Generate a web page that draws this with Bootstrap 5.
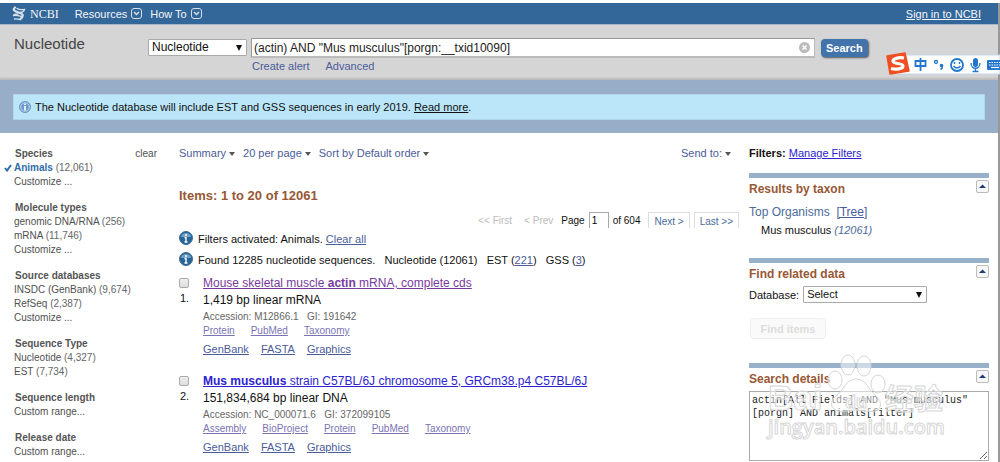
<!DOCTYPE html>
<html lang="en">
<head>
<meta charset="utf-8">
<meta name="viewport" content="width=device-width, initial-scale=1">
<title>Nucleotide - NCBI</title>
<link href="https://cdn.jsdelivr.net/npm/bootstrap@5.3.0/dist/css/bootstrap.min.css" rel="stylesheet">
<style>
body{font-family:"Liberation Sans",Arial,sans-serif;font-size:11px;line-height:14px;color:#111;background:#fff;padding-top:3px}
h1,h2,h3{line-height:14px;margin:0}
a{color:#4b5c9b}
.page{min-height:calc(100vh - 3px);border-right:2px solid #999}
.topbar{background:#336699;height:21px;padding:0 17px 0 12px}
.topbar a{color:#fff;opacity:.95}
.brand{font-family:"Liberation Serif",serif;font-size:12px}
.searchbar{background:#d5d5d5;border-top:1px solid #a9b6c3;height:56px;padding:13px 14px 0;box-shadow:inset 0 -3px 2px -1px #bbb}
.db-title{font-size:15px;font-weight:400;color:#444;width:134px;line-height:16px;margin-top:-2px}
.arrow-select{appearance:none;border:1px solid #aaa;border-radius:1px;font-size:12px;line-height:15px;height:17px;padding:0 16px 0 3px;color:#111;background:#fff url("data:image/svg+xml,%3Csvg xmlns='http://www.w3.org/2000/svg' viewBox='0 0 6 6'%3E%3Cpath d='M0 0h6L3 6z' fill='%23111'/%3E%3C/svg%3E") no-repeat right 4px center/6px 6px}
.db-select{width:99px;margin-top:1px}
.rel-select{width:124px;font-size:11px}
.query{max-width:564px}
.query input{border:1px solid #aaa;border-bottom-width:2px;border-color:#999 #bbb #bbb #999;height:20px;width:100%;font-size:12px;padding:0 24px 0 2px;color:#222}
.query-links{margin-top:1px;padding-left:1px}
.clear-btn{right:5px;top:4px;border:0;padding:0;background:none;line-height:0}
.search-btn{font-size:11px;font-weight:700;line-height:14px;color:#fff;background:#4273ab;border:0;border-radius:4px;height:18px;padding:1px 5px;margin:1px 0 0 6px;box-shadow:1px 1px 2px #555}
.notice-band{background:#98aec8;height:53px;padding:14px 13px}
.notice{background:#bbe5f8;border:1px solid #aed5ec;height:26px;padding:0 5px}
.notice a{color:#111}
.layout{display:grid;grid-template-columns:143px minmax(0,1fr) 240px;padding:0 9px 0 14px}
.facets{font-size:10px;color:#666;padding-top:14px}
.facets h3{font-size:10px;font-weight:700;color:#555;padding-left:1px}
.facets a{color:#505050;text-decoration:none}
.facets ul{margin-bottom:12px}
.facets .active-facet{color:#2f6da8;font-weight:700}
.tick{left:-10px;top:2px}
.results{padding:13px 10px 0 22px}
.menu-btn{border:0;background:none;padding:0;color:#4b5c9b;line-height:14px}
.menu-btn::after{content:"";display:inline-block;border:3px solid transparent;border-top:4px solid #555;border-bottom:0;margin-left:3px;vertical-align:1px}
.count{font-size:13px;font-weight:700;color:#985735;margin-top:29px}
.pager{height:16px;margin-top:9px;font-size:10px;line-height:17px}
.off{color:#bbb}
.pager input{width:20px;height:16px;border:1px solid #aaa;border-bottom:0;padding:0 2px;font-size:10px}
.pager .box{border:1px solid #ddd;border-bottom:0;color:#4b6c9b;text-decoration:none;padding:0 5px}
.msg{height:21px}
.hit{margin-bottom:16px}
.hit-no{width:24px;font-size:11px}
.hit-no input{appearance:none;display:block;width:10px;height:10px;border:1px solid #aaa;border-radius:2px;background:linear-gradient(#eee,#ddd);margin:4px 0 0}
.hit-no label{margin-top:3px;padding-left:1px}
.hit-title{font-size:12px;line-height:18px}
.size-line{font-size:12px;line-height:16px}
.acc{font-size:10px;line-height:14px;color:#666;margin-top:2px}
.refs{font-size:10px;line-height:13px}
.refs a{color:#7a74b4}
.seen{color:#773a9b}
.fresh{color:#2c22d0}
.formats{margin-top:5px}
.side{padding-top:13px}
.portlet{border-top:5px solid #98b1cb;padding-top:4px}
.portlet-taxon{margin-top:13px}
.portlet-related{margin-top:21px}
.portlet h2{font-size:12px;line-height:15px;font-weight:700;color:#985735}
.organisms{font-size:12px}
.taxon-link{color:#4b6c9b}
.fold{width:13px;height:13px;margin-top:-2px;padding:0;border:1px solid #bbb;border-radius:2px;background:#f7f7f7;line-height:0}
.find-btn{font-size:11px;font-weight:700;line-height:14px;color:#ddd;background:#fafafa;border:1px solid #eee;border-radius:4px;height:21px;width:76px;padding:0;margin:15px 0 24px 1px}
.details{font-family:"Liberation Mono",monospace;font-size:10px;line-height:13px;color:#222;border:1px solid #aaa;width:100%;height:70px;padding:2px;overflow:hidden;white-space:pre}
.watermark{left:16px;top:-38px;pointer-events:none}
.ime{right:0;top:51px;z-index:5}
</style>
</head>
<body class="position-relative overflow-x-hidden">
<div class="page">
<nav class="topbar d-flex align-items-center">
  <a href="#" class="brand d-flex align-items-center text-decoration-none">
    <svg width="14" height="15" viewBox="0 0 14 15" fill="none" stroke="#dfe9f3" stroke-linecap="round"><path d="M3 1.500C0 4 3 5.500 6.500 6.500S13 9 8.500 13" stroke-width="2.200"/><path d="M5 2.500C7 4 9 4 12.500 3.500C12 5.500 10 6.500 7.500 6.500M6 8C3 8 1.500 8.500 1.500 9.500C5 9 8 10 10 10.500M2.500 13C5 12.500 6 13 8 13.500" stroke-width="1.300"/></svg>
    <span class="ms-1">NCBI</span></a>
  <a href="#" class="ms-3 d-flex align-items-center gap-1 text-decoration-none">Resources
    <svg width="11" height="11" viewBox="0 0 11 11" fill="none" stroke="#dde8f2"><rect x=".5" y=".5" width="10" height="10" rx="2.500"/><path d="M3 4l2.500 2.500L8 4" stroke-width="1.500"/></svg></a>
  <a href="#" class="ms-2 d-flex align-items-center gap-1 text-decoration-none">How To
    <svg width="11" height="11" viewBox="0 0 11 11" fill="none" stroke="#dde8f2"><rect x=".5" y=".5" width="10" height="10" rx="2.500"/><path d="M3 4l2.500 2.500L8 4" stroke-width="1.500"/></svg></a>
  <a href="#" class="ms-auto">Sign in to NCBI</a>
</nav>
<header class="searchbar d-flex align-items-start">
  <h1 class="db-title flex-shrink-0">Nucleotide</h1>
  <select class="arrow-select db-select flex-shrink-0 me-1" aria-label="Database"><option>Nucleotide</option></select>
  <div class="query flex-grow-1">
    <div class="position-relative">
      <input type="text" class="d-block" aria-label="Search term" value='(actin) AND "Mus musculus"[porgn:__txid10090]'>
      <button class="clear-btn position-absolute" aria-label="Clear"><svg width="11" height="11" viewBox="0 0 11 11"><circle cx="5.500" cy="5.500" r="5.500" fill="#bbb"/><path d="M3.500 3.500l4 4m0-4l-4 4" stroke="#fff" stroke-width="1.500"/></svg></button>
    </div>
    <div class="query-links"><a class="text-decoration-none" href="#">Create alert</a><a class="text-decoration-none ms-3" href="#">Advanced</a></div>
  </div>
  <button class="search-btn">Search</button>
</header>
<div class="notice-band">
  <div class="notice d-flex align-items-center gap-1">
    <svg width="12" height="12" viewBox="0 0 12 12"><circle cx="6" cy="6" r="5.500" fill="#6f9ccc" stroke="#6f98c6"/><circle cx="6" cy="6" r="4.300" fill="none" stroke="#c8dff2" stroke-width=".8"/><path d="M6 2.500v1.500M6 5v4.500" stroke="#fff" stroke-width="1.600"/></svg>
    <span>The Nucleotide database will include EST and GSS sequences in early 2019. <a href="#">Read more</a>.</span>
  </div>
</div>
<div class="layout">
  <aside class="facets">
    <div class="d-flex justify-content-between"><h3>Species</h3><a href="#">clear</a></div>
    <ul class="list-unstyled">
      <li class="position-relative"><svg class="tick position-absolute" width="8" height="9" viewBox="0 0 8 9" fill="none" stroke="#2f6da8" stroke-width="2"><path d="M1 5l2 2.500L7 2"/></svg><a class="active-facet" href="#">Animals</a> (12,061)</li>
      <li><a href="#">Customize ...</a></li>
    </ul>
    <h3>Molecule types</h3>
    <ul class="list-unstyled"><li><a href="#">genomic DNA/RNA</a> (256)</li><li><a href="#">mRNA</a> (11,746)</li><li><a href="#">Customize ...</a></li></ul>
    <h3>Source databases</h3>
    <ul class="list-unstyled"><li><a href="#">INSDC (GenBank)</a> (9,674)</li><li><a href="#">RefSeq</a> (2,387)</li><li><a href="#">Customize ...</a></li></ul>
    <h3>Sequence Type</h3>
    <ul class="list-unstyled"><li><a href="#">Nucleotide</a> (4,327)</li><li><a href="#">EST</a> (7,734)</li></ul>
    <h3>Sequence length</h3>
    <ul class="list-unstyled"><li><a href="#">Custom range...</a></li></ul>
    <h3>Release date</h3>
    <ul class="list-unstyled mb-0"><li><a href="#">Custom range...</a></li></ul>
  </aside>
  <main class="results">
    <div class="d-flex gap-2">
      <button class="menu-btn">Summary</button><button class="menu-btn">20 per page</button><button class="menu-btn">Sort by Default order</button><button class="menu-btn ms-auto me-2">Send to:</button>
    </div>
    <h2 class="count">Items: 1 to 20 of 12061</h2>
    <div class="pager d-flex justify-content-end">
      <span class="off me-2">&lt;&lt; First</span><span class="off ms-1 me-2">&lt; Prev</span>
      <label for="pageno" class="me-1">Page</label><input id="pageno" type="text" value="1"><span class="ms-1 me-2">of 604</span>
      <a class="box me-1" href="#">Next &gt;</a><a class="box" href="#">Last &gt;&gt;</a>
    </div>
    <div class="msg d-flex align-items-center">
      <svg class="me-1" width="15" height="15" viewBox="0 0 15 15"><circle cx="7" cy="7" r="6.500" fill="#286496" stroke="#3a6d99"/><path d="M2 6a5 4 0 0 1 10 0z" fill="#6fa1c8"/><path d="M7 3v2M7 6v5M5.500 11h3M5.500 6.500h2" stroke="#fff" stroke-width="1.400"/></svg>
      <span>Filters activated: Animals. <a href="#">Clear all</a></span>
    </div>
    <div class="msg d-flex align-items-center">
      <svg class="me-1" width="15" height="15" viewBox="0 0 15 15"><circle cx="7" cy="7" r="6.500" fill="#286496" stroke="#3a6d99"/><path d="M2 6a5 4 0 0 1 10 0z" fill="#6fa1c8"/><path d="M7 3v2M7 6v5M5.500 11h3M5.500 6.500h2" stroke="#fff" stroke-width="1.400"/></svg>
      <span>Found 12285 nucleotide sequences. &nbsp; Nucleotide (12061) &nbsp; EST (<a href="#">221</a>) &nbsp; GSS (<a href="#">3</a>)</span>
    </div>
    <article class="hit d-flex mt-1">
      <div class="hit-no"><input type="checkbox" id="r1"><label for="r1">1.</label></div>
      <div>
        <div class="hit-title"><a class="seen" href="#">Mouse skeletal muscle <b>actin</b> mRNA, complete cds</a></div>
        <div class="size-line">1,419 bp linear mRNA</div>
        <div class="acc">Accession: M12866.1 &nbsp; GI: 191642</div>
        <div class="refs d-flex gap-3"><a href="#">Protein</a><a href="#">PubMed</a><a href="#">Taxonomy</a></div>
        <div class="formats d-flex"><a href="#">GenBank</a><a class="mx-2 px-1" href="#">FASTA</a><a href="#">Graphics</a></div>
      </div>
    </article>
    <article class="hit d-flex mb-0">
      <div class="hit-no"><input type="checkbox" id="r2"><label for="r2">2.</label></div>
      <div>
        <div class="hit-title"><a class="fresh" href="#"><b>Mus musculus</b> strain C57BL/6J chromosome 5, GRCm38.p4 C57BL/6J</a></div>
        <div class="size-line">151,834,684 bp linear DNA</div>
        <div class="acc">Accession: NC_000071.6 &nbsp; GI: 372099105</div>
        <div class="refs d-flex gap-3"><a href="#">Assembly</a><a href="#">BioProject</a><a href="#">Protein</a><a href="#">PubMed</a><a href="#">Taxonomy</a></div>
        <div class="formats d-flex"><a href="#">GenBank</a><a class="mx-2 px-1" href="#">FASTA</a><a href="#">Graphics</a></div>
      </div>
    </article>
  </main>
  <aside class="side">
    <div><b>Filters:</b> <a href="#" class="fresh">Manage Filters</a></div>
    <section class="portlet portlet-taxon">
      <div class="d-flex justify-content-between"><h2>Results by taxon</h2><button class="fold" aria-label="Collapse"><svg width="9" height="9" viewBox="0 0 9 9"><path d="M1 6h7L4.500 2.500z" fill="#1d3c78"/></svg></button></div>
      <div class="organisms taxon-link mt-2">Top Organisms &nbsp;<a href="#">[Tree]</a></div>
      <div class="ps-2 ms-1 mt-1">Mus musculus <i class="taxon-link">(12061)</i></div>
    </section>
    <section class="portlet portlet-related">
      <div class="d-flex justify-content-between"><h2>Find related data</h2><button class="fold" aria-label="Collapse"><svg width="9" height="9" viewBox="0 0 9 9"><path d="M1 6h7L4.500 2.500z" fill="#1d3c78"/></svg></button></div>
      <div class="d-flex align-items-center gap-1 mt-1"><label for="reldb">Database:</label><select id="reldb" class="arrow-select rel-select"><option>Select</option></select></div>
      <button class="find-btn" disabled>Find items</button>
    </section>
    <section class="portlet">
      <div class="d-flex justify-content-between"><h2>Search details</h2><button class="fold" aria-label="Collapse"><svg width="9" height="9" viewBox="0 0 9 9"><path d="M1 6h7L4.500 2.500z" fill="#1d3c78"/></svg></button></div>
      <div class="position-relative mt-1">
        <textarea class="details d-block" aria-label="Search details">actin[All Fields] AND "Mus musculus"
[porgn] AND animals[filter]</textarea>
        <svg class="watermark position-absolute" width="184" height="92" viewBox="0 0 184 92" fill="#fff" fill-opacity=".5" stroke="#d6d6d6">
          <ellipse cx="83" cy="12" rx="7" ry="10"/><ellipse cx="99" cy="13" rx="7" ry="10"/><ellipse cx="70" cy="27" rx="7" ry="9"/><ellipse cx="113" cy="31" rx="7" ry="9"/><path d="M91 26C80 26 79 38 71 43C61 51 69 61 81 58Q91 56 101 58C115 61 120 51 111 43C103 37 102 26 91 26z"/>
          <text x="3" y="57" font-family="Liberation Sans,sans-serif" font-weight="700" font-size="35">Bai</text>
          <text x="80" y="55" font-family="Liberation Sans,sans-serif" font-weight="700" font-size="18">du</text>
          <text x="120" y="57" font-family="Noto Sans CJK SC,sans-serif" font-weight="700" font-size="29">经验</text>
          <text x="3" y="81" font-family="Open Sans,sans-serif" font-weight="600" font-size="20">jingyan.baidu.com</text>
        </svg>
      </div>
    </section>
  </aside>
</div>
</div>
<svg class="ime position-absolute" width="115" height="25" viewBox="0 0 115 25" fill="none" stroke="#2277cc" stroke-width="1.800">
  <path d="M10 4h105v19H10z" fill="#fff" stroke="#c5d5e8" stroke-width="1"/>
  <path d="M2 5L20 2l4 18L5 23z" fill="#f04e23" stroke="#f04e23" stroke-linejoin="round" stroke-width="1.500"/>
  <path d="M19 7C13 6 7 8 8 10.500S18 12 18 15S11 19 6 17.500" stroke="#fff" stroke-width="3.200"/>
  <path d="M30.500 10h10v5h-10zM35.500 7v13"/>
  <circle cx="51" cy="11" r="1.500" stroke-width="1.300"/><circle cx="56.500" cy="14.500" r="1.800" fill="#2277cc" stroke="none"/><path d="M57.500 15q0 2.500-2 3.500" stroke-width="1.500"/>
  <circle cx="72" cy="14" r="6"/><path d="M69.500 11v2M74.500 11v2M68.500 15q3.500 4 7 0" stroke-width="1.400"/>
  <rect x="88" y="7" width="5" height="9" rx="2.500" fill="#2277cc" stroke="none"/><path d="M86 12c0 7 9 7 9 0M90.500 17v3M87.500 20.500h6" stroke-width="1.300"/>
  <rect x="102" y="9" width="16" height="10" rx="1" fill="#2277cc" stroke="none"/><path d="M104 11.500h12M104 14h12" stroke="#fff" stroke-width="1.200" stroke-dasharray="1.500 1"/><path d="M106 16.500h8" stroke="#fff" stroke-width="1.200"/>
</svg>
<script src="https://cdn.jsdelivr.net/npm/bootstrap@5.3.0/dist/js/bootstrap.bundle.min.js"></script>
</body>
</html>
